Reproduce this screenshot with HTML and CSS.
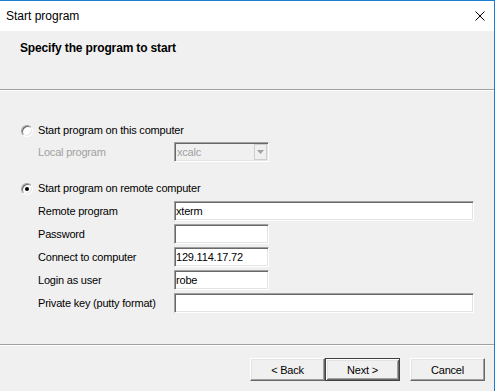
FILE: index.html
```html
<!DOCTYPE html>
<html lang="en">
<head>
    <meta charset="UTF-8">
    <title>Start program</title>
    <link rel="stylesheet" href="styles.css">
</head>
<body>
    <div class="window">
        <div class="titlebar">
            <span class="title">Start program</span>
            <svg class="close" width="10" height="10" viewBox="0 0 10 10">
                <path d="M0.5 0.5L9.5 9.5M9.5 0.5L0.5 9.5" stroke="#000" stroke-width="1" fill="none"/>
            </svg>
        </div>

        <div class="header">
            <h1>Specify the program to start</h1>
        </div>

        <div class="content">
            <div class="radio-row first">
                <span class="radio"></span>
                <span>Start program on this computer</span>
            </div>

            <div class="form-row local">
                <label class="disabled">Local program</label>
                <div class="combo">
                    <span class="combo-text">xcalc</span>
                    <span class="combo-btn">
                        <svg width="7" height="4" viewBox="0 0 7 4"><path d="M0 0H7L3.5 4Z" fill="#a0a0a0"/></svg>
                    </span>
                </div>
            </div>

            <div class="radio-row second">
                <span class="radio checked"></span>
                <span>Start program on remote computer</span>
            </div>

            <div class="fields">
                <div class="form-row">
                    <label for="remoteProgram">Remote program</label>
                    <input type="text" id="remoteProgram" class="wide" value="xterm">
                </div>
                <div class="form-row">
                    <label for="password">Password</label>
                    <input type="password" id="password" class="narrow">
                </div>
                <div class="form-row">
                    <label for="computer">Connect to computer</label>
                    <input type="text" id="computer" class="narrow" value="129.114.17.72">
                </div>
                <div class="form-row">
                    <label for="user">Login as user</label>
                    <input type="text" id="user" class="narrow" value="robe">
                </div>
                <div class="form-row">
                    <label for="privateKey">Private key (putty format)</label>
                    <input type="text" id="privateKey" class="wide">
                </div>
            </div>
        </div>

        <div class="footer">
            <button>&lt; Back</button>
            <button class="default">Next &gt;</button>
            <button class="cancel">Cancel</button>
        </div>
    </div>
</body>
</html>
```

FILE: styles.css
```css
:root {
    --face: #f0f0f0;
    --light: #e3e3e3;
    --shadow: #a0a0a0;
    --dark: #696969;
    --accent: #1a7fd4;
    --disabled: #a0a0a0;
}

* {
    box-sizing: border-box;
}

body {
    margin: 0;
    font-family: "Liberation Sans", Arial, sans-serif;
    font-size: 11px;
    letter-spacing: -0.2px;
    color: #000;
    background: var(--face);
}

.window {
    width: 495px;
    height: 391px;
    display: flex;
    flex-direction: column;
    border-top: 1px solid var(--accent);
    border-right: 1px solid var(--accent);
    background: var(--face);
}

.titlebar {
    height: 30px;
    display: flex;
    align-items: center;
    justify-content: space-between;
    padding: 0 9px 0 6px;
    background: #fff;
}

.title {
    font-size: 12px;
    letter-spacing: 0;
}

.close {
    display: block;
}

.header {
    height: 59px;
    padding: 10px 0 0 20px;
    border-bottom: 1px solid var(--shadow);
}

h1 {
    margin: 0;
    font-size: 12px;
    line-height: 14px;
    font-weight: bold;
    letter-spacing: -0.15px;
}

.content {
    flex: 1;
    border-top: 1px solid #fff;
    padding-top: 33px;
}

.radio-row {
    height: 13px;
    display: flex;
    align-items: center;
    padding-left: 21px;
    line-height: 13px;
}

.radio-row.second {
    margin-top: 20px;
}

.radio {
    position: relative;
    width: 12px;
    height: 12px;
    margin-right: 5px;
    border-radius: 50%;
    border: 1px solid;
    border-color: var(--shadow) #fff #fff var(--shadow);
    background: #fff;
    box-shadow: inset 1px 1px 0 var(--dark), inset -1px -1px 0 var(--light);
}

.radio.checked::after {
    content: "";
    position: absolute;
    left: 3px;
    top: 3px;
    width: 4px;
    height: 4px;
    border-radius: 50%;
    background: #000;
}

.form-row {
    height: 20px;
    display: grid;
    grid-template-columns: 136px auto;
    align-items: center;
    padding-left: 38px;
}

.form-row.local {
    margin-top: 5px;
}

.fields {
    margin-top: 6px;
    display: flex;
    flex-direction: column;
    gap: 3px;
}

label.disabled {
    color: var(--disabled);
}

input,
.combo {
    height: 20px;
    padding: 0 1px;
    font-family: inherit;
    font-size: 11px;
    letter-spacing: -0.2px;
    color: #000;
    border: 1px solid;
    border-color: var(--shadow) #fff #fff var(--shadow);
    box-shadow: inset 1px 1px 0 var(--dark), inset -1px -1px 0 var(--light);
    background: #fff;
    outline: none;
}

input.wide {
    width: 300px;
}

input.narrow {
    width: 95px;
}

.combo {
    width: 95px;
    display: flex;
    align-items: center;
    justify-content: space-between;
    padding: 1px 1px 1px 2px;
    background: var(--face);
    color: var(--disabled);
}

.combo-btn {
    width: 13px;
    height: 16px;
    display: flex;
    align-items: center;
    justify-content: center;
    border: 1px solid #cfcfcf;
    background: var(--face);
}

.footer {
    height: 47px;
    display: flex;
    justify-content: flex-end;
    align-items: flex-start;
    padding: 13px 9px 0 0;
    border-top: 1px solid var(--shadow);
    box-shadow: inset 0 1px 0 #fff;
}

button {
    width: 75px;
    height: 23px;
    padding: 0;
    font-family: inherit;
    font-size: 11px;
    letter-spacing: -0.2px;
    color: #000;
    background: var(--face);
    border: 1px solid;
    border-color: #fff var(--dark) var(--dark) #fff;
    box-shadow: inset -1px -1px 0 var(--shadow), inset 1px 1px 0 var(--light);
}

button.default {
    border-color: #404040;
    box-shadow: inset 1px 1px 0 #fff, inset -1px -1px 0 var(--dark), inset 2px 2px 0 var(--light), inset -2px -2px 0 var(--shadow);
}

button.cancel {
    margin-left: 10px;
}
```
